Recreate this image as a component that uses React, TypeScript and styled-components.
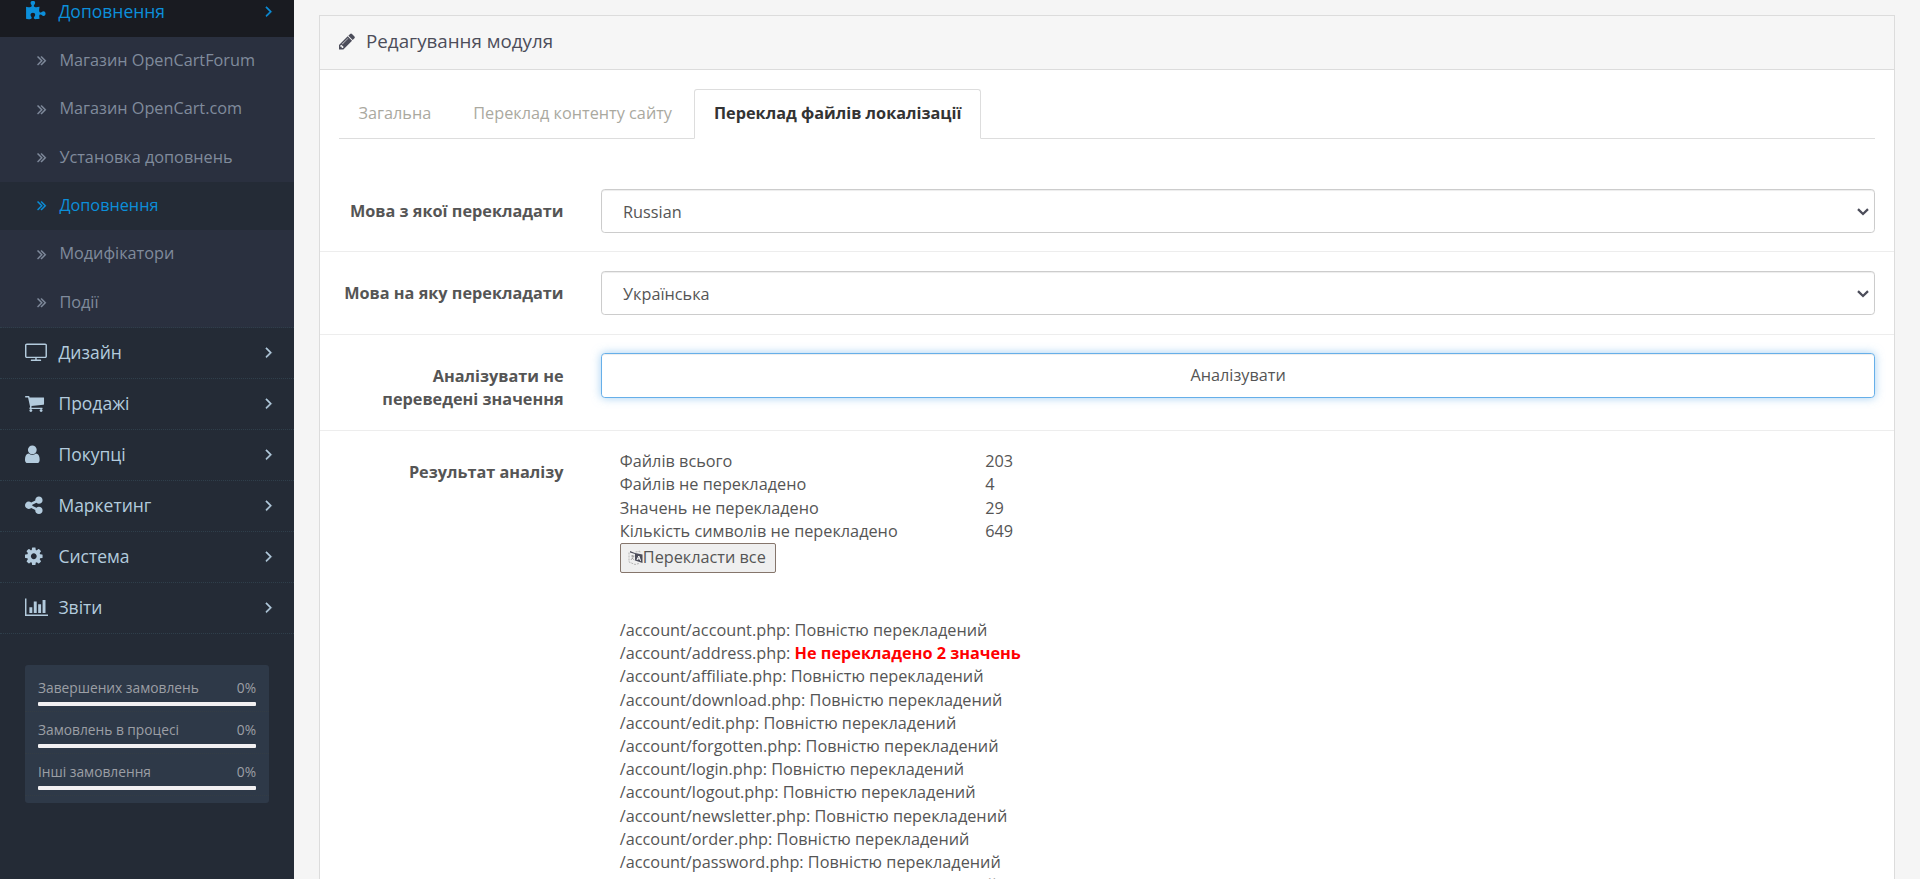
import React from 'react';
import styled, { createGlobalStyle, css } from 'styled-components';

const GlobalStyle = createGlobalStyle`
  *, *::before, *::after { box-sizing: border-box; }
  body {
    margin: 0;
    background: #f5f5f5;
    color: #555;
    font: 16.25px/23.2px "Open Sans", "Noto Sans", sans-serif;
    overflow: hidden;
  }
`;

const Page = styled.div`
  display: flex;
  height: 879px;
  overflow: hidden;
`;

const Sidebar = styled.nav`
  flex: 0 0 294px;
  background: #242b36;
  overflow: hidden;
`;

const MenuItem = styled.a<{ $active?: boolean }>`
  display: flex;
  align-items: center;
  height: 51px;
  padding: 0 21.5px 1px 25px;
  font-size: 17.5px;
  line-height: 25px;
  color: ${p => (p.$active ? '#0c8fda' : '#b3cbdd')};
  ${p =>
    p.$active
      ? css`
          background: #191b21;
          margin-top: -14px;
        `
      : css`
          border-bottom: 1px dotted #2f3f4b;
        `}
`;

const MenuIcon = styled.span`
  display: flex;
  flex: 0 0 33.4px;
`;

const MenuLabel = styled.span`
  flex: 1;
`;

const SubMenu = styled.div`
  background: #2a303f;
  border-bottom: 1px dotted #2f3f4b;
`;

const SubItem = styled.a<{ $active?: boolean }>`
  display: flex;
  align-items: center;
  height: 48.33px;
  padding: 0 0 1.4px 36px;
  gap: 11.8px;
  color: ${p => (p.$active ? '#0c8fda' : '#808b9c')};
  background: ${p => (p.$active ? '#242b36' : 'transparent')};
`;

const Stats = styled.div`
  margin: 31px 25px 0;
  height: 138px;
  border-radius: 3px;
  background: #2e3948;
  padding-top: 5px;
`;

const StatRow = styled.div`
  height: 42px;
  padding: 8px 13px 0;
  border-bottom: 1px dotted #333c44;
`;

const StatText = styled.div`
  display: flex;
  justify-content: space-between;
  font-size: 13.75px;
  line-height: 20px;
  color: #9c9fa5;
`;

const StatBar = styled.div`
  height: 4px;
  margin-top: 4px;
  border-radius: 1px;
  background: #f2f0f2;
`;

const Content = styled.main`
  flex: 1;
  padding: 15px 25px 0;
`;

const Panel = styled.section`
  height: 1000px;
  border: 1px solid #dcdcdc;
  background: #fff;
`;

const PanelHeader = styled.header`
  display: flex;
  align-items: center;
  gap: 11.5px;
  height: 54px;
  padding: 0 18.5px 3px;
  border-bottom: 1px solid #dcdcdc;
  background: #f6f6f6;
  font-size: 18.75px;
  color: #4c4d5a;
`;

const Tabs = styled.div`
  display: flex;
  gap: 2.5px;
  height: 50px;
  margin: 19px 18.75px 31px;
  border-bottom: 1px solid #ddd;
`;

const Tab = styled.a<{ $active?: boolean }>`
  height: 50px;
  padding: 12px 18.75px 0;
  border: 1px solid transparent;
  color: #aaa99f;
  ${p =>
    p.$active &&
    css`
      border-color: #ddd #ddd #fff;
      border-radius: 3px 3px 0 0;
      background: #fff;
      color: #333;
      font-weight: 700;
    `}
`;

const FormRow = styled.div`
  display: flex;
  padding: 18.75px 0;
  & + & {
    border-top: 1px solid #ededed;
  }
`;

const Label = styled.div`
  flex: 0 0 262.3px;
  padding: 11.25px 18.75px 0;
  text-align: right;
  font-weight: 700;
`;

const Field = styled.div`
  flex: 1;
  min-width: 0;
  padding: 0 18.75px;
`;

const Control = styled.div<{ $focused?: boolean }>`
  display: flex;
  align-items: center;
  justify-content: ${p => (p.$focused ? 'center' : 'space-between')};
  height: ${p => (p.$focused ? '45px' : '43.75px')};
  padding: ${p => (p.$focused ? '0 5px' : '3px 5px 0 21px')};
  border: 1px solid ${p => (p.$focused ? '#66afe9' : '#ccc')};
  border-radius: 3.75px;
  box-shadow: inset 0 1px 1px rgba(0, 0, 0, 0.075)
    ${p => (p.$focused ? ', 0 0 10px rgba(102, 175, 233, 0.6)' : '')};
`;

const Results = styled.div`
  padding: 0.8px 0 0 18.75px;
`;

const SummaryRow = styled.div`
  display: grid;
  grid-template-columns: 365.4px auto;
`;

const TranslateButton = styled.button`
  display: flex;
  align-items: center;
  height: 30px;
  margin: 0 0 46px;
  padding: 0 9px 1px 7px;
  border: 1px solid #85756b;
  border-radius: 2px;
  background: #efefef;
  color: #555;
  font: inherit;
`;

const Missing = styled.b`
  color: #f00;
`;

const ICONS: Record<string, { box: string; d: string }> = {
  puzzle: { box: '0 0 1792 1792', d: 'M1755 1083q0 81-44.5 135t-123.5 54q-41 0-77.5-17.5t-59-38-56.5-38-71-17.5q-110 0-110 124 0 39 16 115t15 115v5q-22 0-33 1-34 3-97.5 11.5t-115.5 13.5-98 5q-61 0-103-26.5t-42-83.5q0-37 17.5-71t38-56.5 38-59 17.5-77.5q0-79-54-123.5t-135-44.5q-84 0-143 45.5t-59 127.5q0 43 15 83t33.5 64.5 33.5 53 15 50.5q0 45-46 89-37 35-117 35-95 0-245-24-9-2-27.5-4t-27.5-4l-13-2q-1 0-3-1-2 0-2-1v-1024q2 1 17.5 3.5t34 5 21.5 3.5q150 24 245 24 80 0 117-35 46-44 46-89 0-22-15-50.5t-33.5-53-33.5-64.5-15-83q0-82 59-127.5t144-45.5q80 0 134 44.5t54 123.5q0 41-17.5 77.5t-38 59-38 56.5-17.5 71q0 57 42 83.5t103 26.5q64 0 180-15t163-17v2q-1 2-3.5 17.5t-5 34-3.5 21.5q-24 150-24 245 0 80 35 117 44 46 89 46 22 0 50.5-15t53-33.5 64.5-33.5 83-15q82 0 127.5 59t45.5 143z' },
  screen: { box: '0 0 1920 1792', d: 'M1792 1248v-960q0-13-9.5-22.5t-22.5-9.5h-1600q-13 0-22.5 9.5t-9.5 22.5v960q0 13 9.5 22.5t22.5 9.5h1600q13 0 22.5-9.5t9.5-22.5zm128-960v960q0 66-47 113t-113 47h-736v128h352q14 0 23 9t9 23v64q0 14-9 23t-23 9h-832q-14 0-23-9t-9-23v-64q0-14 9-23t23-9h352v-128h-736q-66 0-113-47t-47-113v-960q0-66 47-113t113-47h1600q66 0 113 47t47 113z' },
  cart: { box: '64 0 1792 1792', d: 'M704 1536q0 52-38 90t-90 38-90-38-38-90 38-90 90-38 90 38 38 90zm896 0q0 52-38 90t-90 38-90-38-38-90 38-90 90-38 90 38 38 90zm128-1088v512q0 24-16.5 42.5t-40.5 21.5l-1044 122q13 60 13 70 0 16-24 64h920q26 0 45 19t19 45-19 45-45 19h-1024q-26 0-45-19t-19-45q0-11 8-31.5t16-36 21.5-40 15.5-29.5l-177-823h-204q-26 0-45-19t-19-45 19-45 45-19h256q16 0 28.5 6.5t19.5 15.5 13 24.5 8 26 5.5 29.5 4.5 26h1201q26 0 45 19t19 45z' },
  user: { box: '256 0 1792 1792', d: 'M1536 1399q0 109-62.5 187t-150.5 78h-854q-88 0-150.5-78t-62.5-187q0-85 8.5-160.5t31.5-152 58.5-131 94-89 134.5-34.5q131 128 313 128t313-128q76 0 134.5 34.5t94 89 58.5 131 31.5 152 8.5 160.5zm-256-887q0 159-112.5 271.5t-271.5 112.5-271.5-112.5-112.5-271.5 112.5-271.5 271.5-112.5 271.5 112.5 112.5 271.5z' },
  share: { box: '128 0 1792 1792', d: 'M1344 1024q133 0 226.5 93.5t93.5 226.5-93.5 226.5-226.5 93.5-226.5-93.5-93.5-226.5q0-12 2-34l-360-180q-92 86-218 86-133 0-226.5-93.5t-93.5-226.5 93.5-226.5 226.5-93.5q126 0 218 86l360-180q-2-22-2-34 0-133 93.5-226.5t226.5-93.5 226.5 93.5 93.5 226.5-93.5 226.5-226.5 93.5q-126 0-218-86l-360 180q2 22 2 34t-2 34l360 180q92-86 218-86z' },
  cog: { box: '128 0 1792 1792', d: 'M1152 896q0-106-75-181t-181-75-181 75-75 181 75 181 181 75 181-75 75-181zm512-109v222q0 12-8 23t-20 13l-185 28q-19 54-39 91 35 50 107 138 10 12 10 25t-9 23q-27 37-99 108t-94 71q-12 0-26-9l-138-108q-44 23-91 38-16 136-29 186-7 28-36 28h-222q-14 0-24.5-8.5t-11.5-21.5l-28-184q-49-16-90-37l-141 107q-10 9-25 9-14 0-25-11-126-114-165-168-7-10-7-23 0-12 8-23 15-21 51-66.5t54-70.5q-27-50-41-99l-183-27q-13-2-21-12.5t-8-23.5v-222q0-12 8-23t19-13l186-28q14-46 39-92-40-57-107-138-10-12-10-24 0-10 9-23 26-36 98.5-107.5t94.5-71.5q13 0 26 10l138 107q44-23 91-38 16-136 29-186 7-28 36-28h222q14 0 24.5 8.5t11.5 21.5l28 184q49 16 90 37l142-107q9-9 24-9 13 0 25 10 129 119 165 170 7 8 7 22 0 12-8 23-15 21-51 66.5t-54 70.5q26 50 41 98l183 28q13 2 21 12.5t8 23.5z' },
  chart: { box: '0 0 2048 1792', d: 'M640 896v512h-256v-512h256zm384-512v1024h-256v-1024h256zm1024 1152v128h-2048v-1536h128v1408h1920zm-640-896v768h-256v-768h256zm384-384v1152h-256v-1152h256z' },
  pencil: { box: '128 0 1536 1792', d: 'M491 1536l91-91-235-235-91 91v107h128v128h107zm523-928q0-22-22-22-10 0-17 7l-542 542q-7 7-7 17 0 22 22 22 10 0 17-7l542-542q7-7 7-17zm-54-192l416 416-832 832h-416v-416zm683 96q0 53-37 90l-166 166-416-416 166-165q36-38 90-38 53 0 91 38l235 234q37 39 37 91z' },
  right: { box: '512 0 768 1792', d: 'M1171 960q0 13-10 23l-466 466q-10 10-23 10t-23-10l-50-50q-10-10-10-23t10-23l393-393-393-393q-10-10-10-23t10-23l50-50q10-10 23-10t23 10l466 466q10 10 10 23z' },
  doubleRight: { box: '256 0 1280 1792', d: 'M979 960q0 13-10 23l-466 466q-10 10-23 10t-23-10l-50-50q-10-10-10-23t10-23l393-393-393-393q-10-10-10-23t10-23l50-50q10-10 23-10t23 10l466 466q10 10 10 23zm384 0q0 13-10 23l-466 466q-10 10-23 10t-23-10l-50-50q-10-10-10-23t10-23l393-393-393-393q-10-10-10-23t10-23l50-50q10-10 23-10t23 10l466 466q10 10 10 23z' },
};

const Icon = ({ name, size, weight = 0 }: { name: string; size: number; weight?: number }) => {
  const { box, d } = ICONS[name];
  const width = (Number(box.split(' ')[2]) / 1792) * size;
  return (
    <svg
      width={width}
      height={size}
      viewBox={box}
      fill="currentColor"
      fillRule="evenodd"
      stroke="currentColor"
      strokeWidth={weight}
    >
      <path d={d} />
    </svg>
  );
};

const SelectArrow = () => (
  <svg width="12" height="8" viewBox="0 0 12 8" fill="none" stroke="#4c4d5a" strokeWidth="2.3">
    <path d="M1 1.2 L6 6 L11 1.2" />
  </svg>
);

const TranslateIcon = () => (
  <svg width="15" height="16" viewBox="0 0 15 16" fill="none">
    <path d="M1 2.5 V12 L7 14.5 L11 13.5" stroke="#b5b5b5" strokeDasharray="2 1" />
    <path d="M7.5 2 L12 1.2 V3" stroke="#b5b5b5" strokeDasharray="2 1" />
    <path d="M3 6 h3.4 M4.6 5 v2 M6 6 L3 10 M3.8 8 L6.4 10" stroke="#999" strokeWidth="0.8" />
    <path d="M2 1 L7 3 L14.5 4.5 V13 L7 10.5 V4 L2 2.6 Z" fill="#4c4d5a" />
    <path d="M9 10 L10.8 6 L12.6 10.8 M9.6 8.8 H12" stroke="#fff" />
  </svg>
);

const subItems = ['Магазин OpenCartForum', 'Магазин OpenCart.com', 'Установка доповнень', 'Доповнення', 'Модифікатори', 'Події'];

const menu = [
  ['screen', 'Дизайн'],
  ['cart', 'Продажі'],
  ['user', 'Покупці'],
  ['share', 'Маркетинг'],
  ['cog', 'Система'],
  ['chart', 'Звіти'],
];

const stats = ['Завершених замовлень', 'Замовлень в процесі', 'Інші замовлення'];

const summary = [
  ['Файлів всього', '203'],
  ['Файлів не перекладено', '4'],
  ['Значень не перекладено', '29'],
  ['Кількість символів не перекладено', '649'],
];

const files: { name: string; missing?: number }[] = [
  { name: 'account' },
  { name: 'address', missing: 2 },
  { name: 'affiliate' },
  { name: 'download' },
  { name: 'edit' },
  { name: 'forgotten' },
  { name: 'login' },
  { name: 'logout' },
  { name: 'newsletter' },
  { name: 'order' },
  { name: 'password' },
  { name: 'recurring' },
];

export default function App() {
  return (
    <Page>
      <GlobalStyle />
      <Sidebar>
        <MenuItem $active>
          <MenuIcon><Icon name="puzzle" size={21} /></MenuIcon>
          <MenuLabel>Доповнення</MenuLabel>
          <Icon name="right" size={18} weight={50} />
        </MenuItem>
        <SubMenu>
          {subItems.map((label, i) => (
            <SubItem key={label} $active={i === 3}>
              <Icon name="doubleRight" size={16.25} weight={30} />
              <span>{label}</span>
            </SubItem>
          ))}
        </SubMenu>
        {menu.map(([icon, label]) => (
          <MenuItem key={label}>
            <MenuIcon><Icon name={icon} size={20.5} /></MenuIcon>
            <MenuLabel>{label}</MenuLabel>
            <Icon name="right" size={18} weight={50} />
          </MenuItem>
        ))}
        <Stats>
          {stats.map(label => (
            <StatRow key={label}>
              <StatText><span>{label}</span><span>0%</span></StatText>
              <StatBar />
            </StatRow>
          ))}
        </Stats>
      </Sidebar>
      <Content>
        <Panel>
          <PanelHeader>
            <Icon name="pencil" size={18.75} />
            <span>Редагування модуля</span>
          </PanelHeader>
          <Tabs>
            <Tab>Загальна</Tab>
            <Tab>Переклад контенту сайту</Tab>
            <Tab $active>Переклад файлів локалізації</Tab>
          </Tabs>
          <FormRow>
            <Label>Мова з якої перекладати</Label>
            <Field><Control><span>Russian</span><SelectArrow /></Control></Field>
          </FormRow>
          <FormRow>
            <Label>Мова на яку перекладати</Label>
            <Field><Control><span>Українська</span><SelectArrow /></Control></Field>
          </FormRow>
          <FormRow>
            <Label>Аналізувати не переведені значення</Label>
            <Field><Control $focused>Аналізувати</Control></Field>
          </FormRow>
          <FormRow>
            <Label>Результат аналізу</Label>
            <Field>
              <Results>
                {summary.map(([label, value]) => (
                  <SummaryRow key={label}><span>{label}</span><span>{value}</span></SummaryRow>
                ))}
                <TranslateButton><TranslateIcon />Перекласти все</TranslateButton>
                {files.map(({ name, missing }) => (
                  <div key={name}>
                    /account/{name}.php:{' '}
                    {missing ? <Missing>Не перекладено {missing} значень</Missing> : 'Повністю перекладений'}
                  </div>
                ))}
              </Results>
            </Field>
          </FormRow>
        </Panel>
      </Content>
    </Page>
  );
}
